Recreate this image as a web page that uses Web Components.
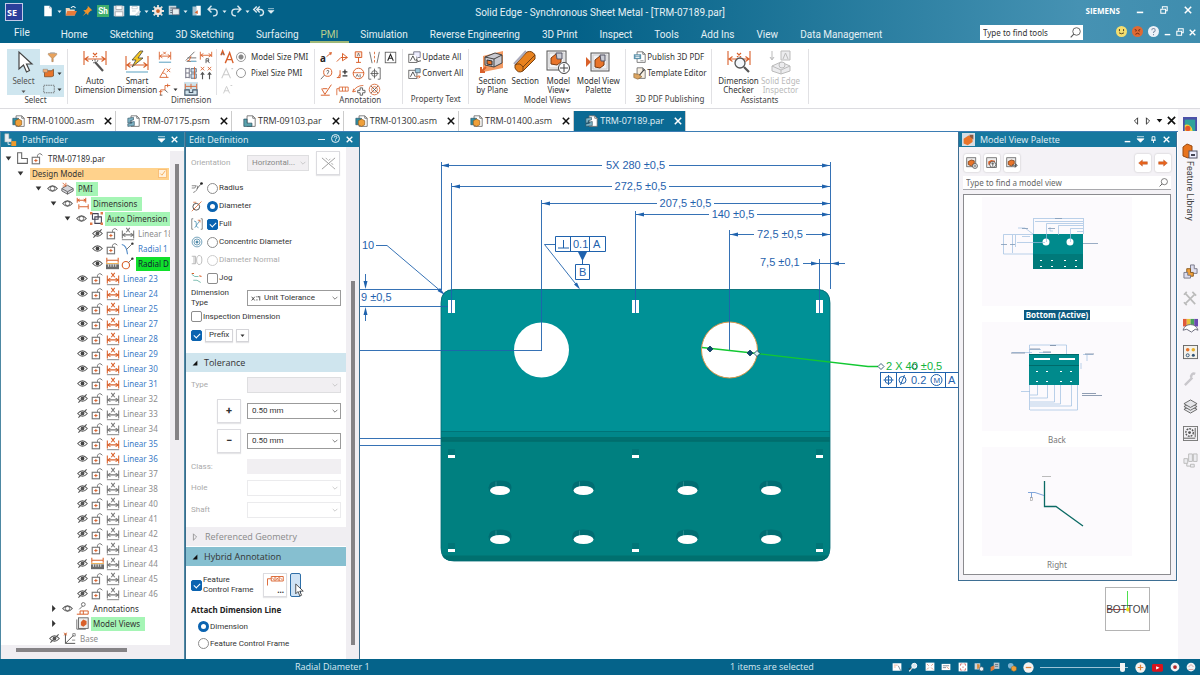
<!DOCTYPE html>
<html lang="en">
<head>
<meta charset="utf-8">
<title>Solid Edge - Synchronous Sheet Metal</title>
<style>
  html, body { margin: 0; height: 100%; }
  body { font: 8px/10px "Noto Sans", "Open Sans", sans-serif; color: #333; background: #fff; overflow: hidden; }
  edge-app { height: 100%; }
</style>
</head>
<body>
<edge-app></edge-app>
<script>
const O = '#d9602a', G = '#555', T = '#008a8c';

/* ---------- icon set: name -> [viewBox, markup] ---------- */
const dimBase = (a, b) => `<g fill="none" stroke="${b}" stroke-width="1.200"><path d="M1.500 4v9M14.500 4v9M2 9h12"/><path d="M5 7L2 9l3 2M11 7l3 2-3 2"/></g><path d="M1 14.500h14" stroke="#777"/><path d="M6 1l4 5M10 1L6 6" stroke="${a}" fill="none" stroke-width="1.200"/>`;
const bigDim = `<g fill="none" stroke="${O}" stroke-width="1.1"><path d="M1 1v14M23 1v14M2 9h20M5.500 6.500L2 9l3.500 2.500M18.500 6.500L22 9l-3.500 2.500M10 3l4 4M14 3l-4 4"/></g>`;
const eyeShape = `<path d="M1 8q7-8 14 0q-7 8-14 0z" fill="none" stroke="${G}" stroke-width="1.500"/>`;
const paper = (c = '#fff') => `<path d="M5 1h7l3 3v10h-10z" fill="${c}" stroke="#666"/><path d="M12 1v3h3" fill="none" stroke="#666"/>`;
const small = '0 0 16 16';
const ICONS = {
  doc: [small, `<path d="M3 1h7l3 3v11H3z" fill="#fff"/><path d="M10 1v3h3" fill="none" stroke="#9ab"/>`],
  open: [small, `<path d="M1 4h5l1 2h6v8H1z" fill="#e9d5bd"/><path d="M3 8h13l-3 6H1z" fill="#e87b3a"/><path d="M8 4q3-4 6 0" stroke="#fff" fill="none" stroke-width="1.500"/>`],
  pin: [small, `<path d="M9 1l6 6-2 .5-3 3-.5 3L7 11l-5 4 4-5-3-3 3.500-.5 2.500-3z" fill="#f0932b"/>`],
  sh: [small, `<rect width="16" height="16" fill="#3fae6c"/><text x="8" y="12" text-anchor="middle" font-size="11" font-weight="700" fill="#fff">Sh</text>`],
  save: [small, `<path d="M1 1h13l1 1v13H1z" fill="#d9dfe4"/><path d="M4 1h8v5H4zM3 9h10v6H3z" fill="#fff" stroke="#8b8f96" stroke-width=".8"/>`],
  saveas: [small, `<path d="M1 1h13v13H1z" fill="#fff"/><path d="M4 2h7v3H4zM4 8h5" fill="none" stroke="#b8c4cc"/><path d="M8 13l6-6 2 2-6 6z" fill="#d5dde2"/>`],
  gear: [small, `<path d="M8 0v16M0 8h16M2.300 2.300l11.400 11.400M13.700 2.300L2.300 13.700" stroke="#e6dfd8" stroke-width="2.400"/><circle cx="8" cy="8" r="5.500" fill="#efe8e2"/><circle cx="8" cy="8" r="2.500" fill="#c8622a"/>`],
  menu: [small, `<path d="M1 1h10v12H1z" fill="#c9d6de"/><path d="M3 4h11M3 7h9M3 10h9" stroke="#34495a"/><path d="M6 5h9v8H6z" fill="#e7edf0" stroke="#667"/>`],
  door: [small, `<path d="M2 2h5v12H2z" fill="#a9c3d0"/><path d="M7 1h6v13H7z" fill="#fff"/><path d="M9 7l-4 3 4 2" fill="#d9602a"/>`],
  undo: [small, `<path d="M6 1L1.500 5.500 6 10M2 5.500h7a4.500 4.500 0 010 9H8" fill="none" stroke="#dbe9f0" stroke-width="1.900"/>`],
  redo: [small, `<path d="M10 1l4.500 4.500L10 10M14 5.500H7a4.500 4.500 0 000 9h1" fill="none" stroke="#dbe9f0" stroke-width="1.900"/>`],
  undoall: [small, `<path d="M5 2L1 6l4 4M9 2L5 6l4 4M5 6h5a4 4 0 010 8H9" fill="none" stroke="#dbe9f0" stroke-width="1.900"/>`],
  caretbar: ['0 0 10 10', `<path d="M0 1h10M0 4h10L5 9z" stroke="currentColor" fill="currentColor"/>`],
  caret: ['0 0 10 10', `<path d="M1 3h8L5 8z" fill="currentColor"/>`],
  tleft: ['0 0 10 10', `<path d="M7 1v8L3 5z" fill="none" stroke="currentColor"/>`],
  tright: ['0 0 10 10', `<path d="M3 1v8l4-4z" fill="none" stroke="currentColor"/>`],
  tree1: ['0 0 10 10', `<path d="M1 2h8L5 8z" fill="#333"/>`],
  tree0: ['0 0 10 10', `<path d="M3 0v10l5-5z" fill="#333"/>`],
  corner: ['0 0 10 10', `<path d="M9 1v8H1z" fill="#111"/>`],
  chev: ['0 0 10 10', `<path d="M1 3l4 4 4-4" fill="none" stroke="currentColor" stroke-width="1.200"/>`],
  min: ['0 0 10 10', `<path d="M1 8h8" stroke="currentColor" stroke-width="2"/>`],
  dash: ['0 0 10 10', `<path d="M0 5h10" stroke="currentColor" stroke-width="1.300"/>`],
  restore: ['0 0 10 10', `<path d="M3 3V1h6v5H7M1 4h6v5H1z" fill="none" stroke="currentColor" stroke-width="1.300"/>`],
  close: ['0 0 10 10', `<path d="M1 1l8 8M9 1L1 9" stroke="currentColor" stroke-width="1.900"/>`],
  help: ['0 0 10 10', `<circle cx="5" cy="5" r="4.400" fill="none" stroke="currentColor"/><path d="M3.500 4q0-1.500 1.500-1.500T6.500 4Q6.500 5 5 5.500V6M5 7v1" fill="none" stroke="currentColor"/>`],
  helpball: [small, `<circle cx="8" cy="8" r="8" fill="#eef2f8"/><path d="M5.500 6q0-2.500 2.500-2.500T10.500 6Q10.500 7.500 8 9v1M8 11.500v2" fill="none" stroke="#7d90a8" stroke-width="1.500"/>`],
  happy: [small, `<circle cx="8" cy="8" r="8" fill="#f5de6e"/><path d="M5 4.500v3M11 4.500v3M4.500 10q3.500 2.500 7 0" stroke="#4a4020" stroke-width="1.400" fill="none"/>`],
  angry: [small, `<circle cx="8" cy="8" r="8" fill="#df6a33"/><path d="M4 5l3 1.500M12 5L9 6.500M5 12q3-3 6 0M5.500 7v1M10.500 7v1" stroke="#5a2410" stroke-width="1.300" fill="none"/>`],
  search: [small, `<circle cx="9.500" cy="6.500" r="5.500" fill="none" stroke="#555" stroke-width="1.300"/><path d="M5.500 10.500L1 15" stroke="#555" stroke-width="1.600"/>`],
  pinned: ['0 0 10 10', `<path d="M3 1h4v5H3zM1.500 6h7M5 6v4" fill="none" stroke="currentColor" stroke-width="1.300"/>`],

  cursor: ['0 0 24 24', `<path d="M7 2v17l4.500-4 3 7 3-1.500-3-6.500h5.500z" fill="#fff" stroke="#444" stroke-width="1.200"/>`],
  filter: [small, `<path d="M2 2h12v2L9 9v5H7V9L2 4z" fill="#e8a25c" stroke="#9a7b5c" stroke-width=".8"/><path d="M5 2v-1h6v1" stroke="#999" fill="none"/>`],
  selbox: [small, `<path d="M2 5h9l3-2v9l-3 1H2z" fill="#e8742a" stroke="#7a4a20"/><path d="M0 3h6v4H0z" fill="#f6b27a" stroke="#777" stroke-width=".6"/>`],
  dashbox: [small, `<rect x="1" y="3" width="14" height="10" fill="none" stroke="#555" stroke-dasharray="2 1"/>`],
  autodim: ['0 0 24 24', bigDim + `<path d="M12 12l8 9" stroke="#555" stroke-width="2.200"/><path d="M10 13l2-1M12 9v2M15 10l-1 2M9 10l1 1" stroke="#777"/>`],
  smartdim: ['0 0 24 24', `<g fill="none" stroke="${O}" stroke-width="1.100"><path d="M1 6v14M23 6v14M2 15h20M5.500 12.500L2 15l3.500 2.500M18.500 12.500L22 15l-3.500 2.500"/></g><path d="M15 1L7 10h4l-4 7 11-9h-5l5-7z" fill="#f3c623" stroke="#444" stroke-width=".8"/><path d="M1 22h22" stroke="#7fb6cf" stroke-width="1.300"/>`],
  dimh: [small, `<g fill="none" stroke="${O}"><path d="M1.500 2v9M14.500 2v9M2 7h12M5 5L2 7l3 2M11 5l3 2-3 2M6 2l3 3M9 2L6 5"/></g><path d="M1 14h14" stroke="#7fb6cf" stroke-width="1.500"/>`],
  dimang: [small, `<path d="M2 13L8 3M2 13h10" stroke="${O}" fill="none"/><path d="M5 8q5 0 5 5M10 3l4 4M14 3l-4 4" stroke="${O}" fill="none"/>`],
  dimcoord: [small, `<path d="M3 15V9h5V4h6M1 11h4M11 2v4" stroke="${O}" fill="none"/><path d="M2 15h3M8 9l3 3" stroke="#555"/>`],
  dimlin: [small, `<path d="M2 12L12 2M4 9h10M3 13h11" stroke="#666" fill="none"/><path d="M4 12h2l2-5" stroke="${O}" fill="none"/><path d="M8 13h6" stroke="#7fb6cf" stroke-width="1.500"/>`],
  dimr: [small, `<g fill="none" stroke="${O}"><path d="M1.500 2v9M14.500 2v6M2 6h12M5 4L2 6l3 2M11 4l3 2-3 2"/></g><path d="M8 15v-5h3v2.500H8M10 12l2 3" fill="none" stroke="#555"/>`],
  dimstack: [small, `<path d="M2 2v12M6 2v12M2 3h4M2 8h4M2 13h4" stroke="#667" fill="none"/><path d="M8 3h6v4H8zM8 9h6v5H8z" fill="#cde" stroke="#567"/><path d="M12 1v14" stroke="${O}"/>`],
  dimxx: [small, `<path d="M2 1l4 4M6 1L2 5M10 1l4 4M14 1l-4 4" stroke="${O}"/><path d="M4 15V8M2 10l2-2.500L6 10M12 15V8M10 10l2-2.500L14 10" stroke="#555" fill="none" stroke-width="1.300"/>`],
  dimauto: [small, `<rect width="16" height="16" fill="#cfe3ec"/><path d="M1.500 2v6M14.500 2v6M2 5h12M8 2v6" stroke="${O}" fill="none"/><path d="M1 9h5v3h4V9h5v6H1z" fill="none" stroke="#456" stroke-width="1.200"/>`],
  fontup: [small, `<path d="M1 6L3 1l2 5M6 15L11 3l4 12M8 11h6" stroke="${O}" fill="none" stroke-width="1.600"/><path d="M1.500 4.500h3" stroke="#555"/>`],
  fontA: [small, `<path d="M2 14L7 3l5 11M4 10h6M13 3h2" stroke="#ccc" fill="none" stroke-width="1.200"/>`],
  fonta: [small, `<path d="M4 13L7.500 5 11 13M5 10h5M12 4h2" stroke="#ccc" fill="none" stroke-width="1.100"/>`],

  leader: [small, `<path d="M8 7l6-5M14 2l-3 .5M14 2l-1 3" stroke="${O}" fill="none" stroke-width="1.200"/><text x="0" y="14" font-size="12" font-weight="700" fill="#222">a</text>`],
  arrowr: [small, `<path d="M1 13l5-5h8M8 3l6 5-6 4z" fill="none" stroke="${O}" stroke-width="1.200"/>`],
  datum: [small, `<path d="M4 1h8v7H4zM8 8v6M5 14h6" fill="#fbe9df" stroke="${O}" stroke-width="1.200"/><path d="M6.500 6.500L8 2.500l1.500 4" stroke="#555" fill="none" stroke-width=".8"/>`],
  edges: [small, `<path d="M2 1l3 14M14 1l-3 14" stroke="#777" fill="none" stroke-width="1.200"/><path d="M8 1v14" stroke="${O}" stroke-dasharray="3 2"/>`],
  boxA: [small, `<rect x="1.500" y="1.500" width="13" height="13" fill="none" stroke="#555"/><path d="M4.500 12L8 4l3.500 8M6 9h4" stroke="#222" fill="none" stroke-width="1.300"/>`],
  balloon: [small, `<circle cx="9.500" cy="6.500" r="5" fill="none" stroke="${O}" stroke-width="1.200"/><path d="M5.500 10L1 15M8 5q2-2 3 0l-2 4" stroke="#555" fill="none"/>`],
  rough: [small, `<path d="M1 13h4V4M5 9l-2 3" stroke="${O}" fill="none" stroke-width="1.200"/><path d="M11 3v6M8 6h6M8 11h6" stroke="#333" stroke-width="1.600"/>`],
  target: [small, `<circle cx="8" cy="8" r="6.500" fill="none" stroke="${O}" stroke-width="1.200"/><path d="M1 7h14" stroke="${O}"/><path d="M5 12l1.500-3L8 12M10 9v4" stroke="#555" fill="none"/>`],
  hole: [small, `<path d="M4 1H1v14h3M12 1h3v14h-3M8 2v12M3 8h10" stroke="#555" fill="none"/><circle cx="8" cy="8" r="3.500" fill="none" stroke="#555"/>`],
  surface: [small, `<path d="M2 7l4 7 8-12M3 7h6M1 15h11" stroke="${O}" fill="none" stroke-width="1.200"/>`],
  fcf: [small, `<path d="M4 5h11v5H4zM8 5v5M11.500 5v5M4 7H1v8" stroke="${O}" fill="none"/>`],
  cross: [small, `<path d="M1 11Q5 3 14 3M1 11l1-4M1 11l4-1" stroke="${O}" fill="none"/><path d="M10 6h3v3h3v3h-3v3h-3v-3H7V9h3z" stroke="#555" fill="none" stroke-width="1.100"/>`],
  weld: [small, `<circle cx="8" cy="8" r="6.500" fill="none" stroke="${O}"/><path d="M3.500 3.500l9 9M12.500 3.500l-9 9" stroke="#555"/><circle cx="8" cy="8" r="3.500" fill="none" stroke="${O}"/>`],
  upall: [small, `<rect x="1" y="4" width="10" height="10" fill="none" stroke="#555"/><path d="M3 12l3-6 3 6M10 10l2 3 4-1" stroke="#333" fill="none"/><path d="M7 4V1h8v7h-3" fill="#eef" stroke="#667"/>`],
  convall: [small, `<rect x="1" y="4" width="10" height="10" fill="none" stroke="#555"/><path d="M3 12l3-6 3 6" stroke="#333" fill="none"/><path d="M9 2h6v5H9z" fill="#9cc7da" stroke="#567"/><path d="M10 12h5M13 10l2 2-2 2" stroke="${O}" fill="none"/>`],
  secplane: ['0 0 24 24', `<path d="M3 6L23 1v17L3 22z" fill="#f29a63"/><path d="M5 7l10-4 7 2v8l-8 4-9-2z" fill="#c9c9cf" stroke="#444"/><path d="M5 7l9 2v8M14 9l8-4" fill="none" stroke="#444"/><path d="M7 10l5 1v4l-5-1z" fill="#e8742a" stroke="#333"/><path d="M1 17v5h4M1 22l5-5" stroke="${O}" stroke-width="2" fill="none"/>`],
  section: ['0 0 24 24', `<path d="M2 15L14 2q5-2 8 3v4L10 21q-5 3-8-3z" fill="#e8821e" stroke="#7a4210"/><path d="M2 15q5-3 8 2v4M10 17L22 5" stroke="#7a4210" fill="none"/><path d="M1 14L13 1" stroke="#aab" stroke-width="2"/>`],
  mview: ['0 0 24 24', `<rect x="1" y="1" width="19" height="19" fill="#f4f4f6" stroke="#555"/><path d="M3 3h15v15H3z" fill="none" stroke="#ccc"/><path d="M5 8l5-4 5 1v7l-4 3-6-1z" fill="#e8742a" stroke="#7a3a10"/><path d="M10 3h6v6h-5z" fill="#c9cbd3" stroke="#556"/><circle cx="18" cy="18" r="5.500" fill="#fff" stroke="#444"/><path d="M18 14v8M14 18h8" stroke="#444"/>`],
  mvpal: ['0 0 24 24', `<rect x="5" y="3" width="18" height="18" fill="#f0f0f3" stroke="#555"/><path d="M7 5h14v14H7z" fill="none" stroke="#ccc"/><path d="M9 10l5-4 4 1v8l-4 3-5-1z" fill="#e8742a" stroke="#7a3a10"/><path d="M14 5h5v6h-4z" fill="#c9cbd3" stroke="#556"/><path d="M0 7l5 5-5 5z" fill="${O}"/>`],
  pdf: [small, `${paper()}<path d="M1 4h9v6H1z" fill="#5f94ad"/><path d="M3 6h5M3 8h5" stroke="#fff"/><path d="M9 12h4" stroke="#888"/>`],
  tmpl: [small, `${paper('#f7efe2')}<path d="M1 8l6 1 4 3-5 3-5-2z" fill="#dba461" stroke="#7a5a30" stroke-width=".7"/><path d="M8 10l6-7" stroke="#444" stroke-width="1.400"/>`],
  dimcheck: ['0 0 24 24', bigDim + `<circle cx="13" cy="13" r="5" fill="#f2f7fb" stroke="#555" stroke-width="1.300"/><path d="M17 17l5 5" stroke="#555" stroke-width="2.200"/>`],
  inspect: ['0 0 24 24', `<g fill="#ececee" stroke="#bbb"><path d="M12 1h9v9h-9zM3 1v8M1 7l2 3 2-3M3 16l9-4 9 4v5l-9 3-9-3z"/><path d="M3 16l9 4 9-4M12 20v4" fill="none"/><path d="M14 9l2.500-6L19 9" fill="none"/><circle cx="13" cy="15" r="3"/></g>`],

  asm: [small, `${paper()}<path d="M1 4h7v8H1z" fill="#2f8fa5" stroke="#245" stroke-width=".7"/><path d="M4 7l4-2 4 2v5l-4 2-4-2z" fill="#f0a03a" stroke="#7a4a10" stroke-width=".7"/>`],
  psm: [small, `${paper()}<path d="M1 4l7-1v3l-4 1v2l5-1v5l-8 1v-3l5-1v-1l-5 1z" fill="#7fb4c6" stroke="#245" stroke-width=".7"/>`],
  par: [small, `${paper()}<path d="M1 5h4v5h6v4H1z" fill="#5aa3ad" stroke="#245" stroke-width=".8"/>`],

  pf: [small, `<path d="M1 1h5v6h3v4H1z" fill="#e9eef2" stroke="#aaa" stroke-width=".6"/><path d="M9 10h6v6H9z" fill="#ef9a2c"/><path d="M5 11v3h3" stroke="#fff" fill="none"/>`],
  ell: [small, `<path d="M2 1h5v7h7v6H2z" fill="#fff" stroke="#666" stroke-width="1.300"/>`],
  lock: [small, `<rect x="1.500" y="6.500" width="9" height="8" fill="#fff" stroke="#777" stroke-width="1.400"/><path d="M8 6V4q2.500-4 6 0" fill="none" stroke="#777" stroke-width="1.200"/><path d="M6 8.500v4M4 10.500h4" stroke="${O}" stroke-width="1.200"/>`],
  eye: [small, eyeShape + `<circle cx="8" cy="8" r="2.800" fill="#444"/>`],
  eyeo: [small, eyeShape + `<circle cx="8" cy="8" r="3.200" fill="none" stroke="${G}" stroke-width="1.200"/>`],
  eyex: [small, eyeShape + `<circle cx="8" cy="8" r="2.800" fill="#555"/><path d="M2 14L14 2" stroke="#555" stroke-width="1.500"/>`],
  pmi: [small, `<path d="M1 8l7-4 7 4v3l-7 4-7-4z" fill="#d5d5da" stroke="#555"/><path d="M1 8l7 4 7-4M8 12v3" stroke="#555" fill="none"/><path d="M2 1l4 4M6 1v4H2" stroke="${O}" fill="none"/>`],
  dims: [small, `<g fill="none" stroke="${O}" stroke-width="1.200"><path d="M1.500 1v6M12 1v6M2 4h10M3.500 9v6M15 9v6M4 12h11M4.500 2.500L2 4l2.500 1.500M9.500 2.500L12 4 9.500 5.500"/></g>`],
  group: [small, `<path d="M3 2h7v7H3zM6 6h8v8H6z" fill="none" stroke="#445" stroke-width="1.300"/><path d="M0 0h3v3H0zM13 0h3v3h-3zM0 13h3v3H0zM13 13h3v3h-3z" fill="#e07a4a"/>`],
  lin: [small, dimBase(O, O)],
  ling: [small, dimBase('#777', '#777')],
  rad: [small, `<path d="M1 3q6 1 7 12" stroke="#4a86c5" fill="none" stroke-width="1.300"/><path d="M7 9l6-6" stroke="#555"/><circle cx="14" cy="2" r="1.500" fill="#333"/>`],
  radd: [small, `<circle cx="6" cy="10" r="4.500" fill="none" stroke="${O}" stroke-width="1.400"/><path d="M9 7l5-5" stroke="#555"/><circle cx="14" cy="2" r="1.500" fill="#333"/>`],
  ruler: [small, `<path d="M1 1v6M15 1v6M1 4h14" stroke="${O}" stroke-width="1.300"/><path d="M0 9h16v6H0z" fill="#6b6b6b"/><path d="M3 9v3M6 9v3M9 9v3M12 9v3" stroke="#fff"/><path d="M0 8h16" stroke="#e8a23c"/>`],
  annot: [small, `<circle cx="9" cy="3" r="2.300" fill="none" stroke="#555"/><path d="M8 5L4 9" stroke="#555"/><path d="M1 15h14v-4H5v4M9 11v4" fill="none" stroke="${O}" stroke-width="1.200"/>`],
  mviews: [small, `<rect x="3" y="1" width="12" height="13" fill="#eee" stroke="#555"/><path d="M1 3v12h11" stroke="#555" fill="none"/><path d="M6 6l3-3 4 2v4l-4 3-3-2z" fill="${O}"/>`],
  base: [small, `<path d="M3 2v12h12M3 14L13 4" stroke="#555" fill="none" stroke-width="1.200"/><path d="M1 1l4 3M5 1L1 4" stroke="${O}"/><path d="M12 2h3v3h-3zM11 10h4" stroke="#777" fill="none"/>`],
  tick: [small, `<rect x="1" y="1" width="14" height="14" fill="#fff1dc" stroke="#f8b96e" stroke-width="1.500"/><path d="M4 8l3 3 6-8" stroke="#f3a64a" fill="none" stroke-width="1.500"/>`],

  nodim: [small, `<path d="M1 2l14 12M15 2L1 14" stroke="#999"/><path d="M5 2l2 2M8 5l2-2M11 8l2 1" stroke="#aaa"/>`],
  eradius: [small, `<path d="M1 5h6M1 8h4l2-3M3 14q6-2 6-9" stroke="#666" fill="none"/><path d="M8 9l5-6" stroke="#444"/><circle cx="14" cy="2" r="1.800" fill="#222"/>`],
  ediam: [small, `<circle cx="7" cy="9" r="4.500" fill="none" stroke="#444" stroke-width="1.200"/><path d="M1 15L14 2M3 3h4" stroke="${O}"/>`],
  efull: [small, `<path d="M3 1H1v14h2M13 1h2v14h-2" stroke="#666" fill="none"/><path d="M4 4q4 0 3 4t3 5M12 3L5 13" stroke="#4a8fb0" fill="none"/><path d="M9 3h3v3" stroke="${O}" fill="none"/>`],
  econc: [small, `<g fill="none" stroke="#4a86a5"><circle cx="8" cy="8" r="6.500"/><circle cx="8" cy="8" r="4"/><circle cx="8" cy="8" r="1.500" fill="#4a86a5"/></g>`],
  enorm: [small, `<path d="M1 3h5v10H1M4 3v10" stroke="#aaa" fill="none"/><ellipse cx="11" cy="8" rx="3.500" ry="6" fill="none" stroke="#aaa"/>`],
  ejog: [small, `<path d="M1 3l4 3h5M3 11h5l5 3" stroke="#5a9" fill="none"/><path d="M1 2h3M11 5l3 1" stroke="${O}" stroke-width="1.500"/>`],
  unittol: [small, `<path d="M1 6l5 6M6 6l-5 6M14 5v7M9.500 5v2M9.500 10v2M12 5v2" stroke="#333" fill="none" stroke-width="1.300"/>`],
  fcfbtn: ['0 0 24 16', `<path d="M7 2h16v6H7zM12 2v6M17.500 2v6M7 5H2v9" stroke="${O}" fill="none" stroke-width="1.200"/><path d="M8.500 3.500l2 3M13.500 3.500l3 3M16.500 3.500l-3 3M19 3.500l2.500 3" stroke="${O}"/>`],
  pointer: ['0 0 12 18', `<path d="M1 1v13l3-3 2.500 6 2.300-1-2.500-5.500H11z" fill="#fff" stroke="#222"/>`],

  cubeicon: [small, `<rect width="16" height="16" fill="#d6dde3"/><path d="M2 7l6-4 5 2v6l-6 4-5-2z" fill="#e8742a"/><path d="M9 2h5v6l-4-3z" fill="#8a5a44"/>`],
  mvt: [small, `<rect x="1" y="1" width="12" height="12" fill="#eee" stroke="#555"/><path d="M3 6l4-2 4 1v4l-4 3-4-2z" fill="#e8742a" stroke="#7a3a10"/><circle cx="12" cy="12" r="3.300" fill="#fff" stroke="#444"/><path d="M12 10v4M10 12h4" stroke="#444" stroke-width=".8"/>`],
  mvt2: [small, `<rect x="1" y="1" width="13" height="13" fill="#eee" stroke="#555"/><path d="M3 6l4-2 5 1v5l-4 2-5-2z" fill="#d9602a"/><circle cx="9" cy="10" r="4" fill="#fff" stroke="#444"/><path d="M9 7v6M7 9h4" stroke="#444"/>`],
  mvt3: [small, `<rect x="1" y="1" width="12" height="12" fill="#eee" stroke="#555"/><path d="M3 6l4-2 4 1v4l-4 3-4-2z" fill="#e8742a" stroke="#7a3a10"/><path d="M8 11h6M12 9l3 2-3 3" stroke="#333" fill="none"/>`],
  aleft: [small, `<path d="M1 8l6-5v3h8v4H7v3z" fill="#e8641e" stroke="#a8481a" stroke-width=".6"/>`],
  aright: [small, `<path d="M15 8L9 3v3H1v4h8v3z" fill="#e8641e" stroke="#a8481a" stroke-width=".6"/>`],

  contour: [small, `<rect width="16" height="16" fill="#4b4fa8"/><path d="M2 3h12v13H2z" fill="#2fa39a"/><path d="M2 16V9a7 7 0 019 7z" fill="#f5d23c"/><circle cx="5.500" cy="13" r="3" fill="#e8552a"/>`],
  feat: [small, `<path d="M1 4l4-3 5 2v9l-4 3-5-2z" fill="#e8741e" stroke="#9a4a10"/><rect x="7" y="8" width="8" height="7" fill="#eef" stroke="#556"/><path d="M9 11h4v2H9z" fill="#445"/>`],
  family: [small, `<path d="M8 1h4v4h3v5H8z" fill="#dde" stroke="#778"/><path d="M4 5h4v4h3v4H4z" fill="#f0a03a" stroke="#8a5a20"/><path d="M1 9h4v3h3v3H1z" fill="#dde" stroke="#778"/>`],
  tools: [small, `<path d="M2 2l11 12M13 3L3 13M10 1l4 4M1 12l3 3M1 4l3-3" stroke="#bbb" stroke-width="1.800" fill="none"/>`],
  paint: [small, `<rect x="0" y="1" width="4" height="8" fill="#e05a3a"/><rect x="4" y="1" width="4" height="8" fill="#e8c33a"/><rect x="8" y="1" width="4" height="8" fill="#4aa35a"/><rect x="12" y="1" width="4" height="8" fill="#6a4ab0"/><path d="M0 13q2-6 8-6t8 6l-3-1-4 3-5-3z" fill="#fff" stroke="#667"/>`],
  palette: [small, `<rect x=".5" y=".5" width="15" height="14" fill="#f4f1ea" stroke="#666"/><circle cx="5" cy="5" r="1.900" fill="#e8742a"/><circle cx="11" cy="5" r="1.900" fill="#e8b02a"/><circle cx="5" cy="11" r="1.600" fill="none" stroke="#357"/><circle cx="11" cy="11" r="1.600" fill="#357"/>`],
  wrench: [small, `<path d="M2 14l8-8M9 6a3 3 0 014-4" stroke="#c9c7cc" stroke-width="2.500" fill="none"/>`],
  layers: [small, `<g fill="#e6e6ea" stroke="#555" stroke-width=".9"><path d="M1 11l7-3.500 7 3.500-7 4z"/><path d="M1 8l7-3.500L15 8l-7 4z"/><path d="M1 5l7-4 7 4-7 4z"/></g>`],
  gearbox: [small, `<rect x=".5" y=".5" width="15" height="15" fill="#f4f2f6" stroke="#777"/><circle cx="7" cy="7" r="4" fill="none" stroke="#555" stroke-dasharray="2 1" stroke-width="1.500"/><circle cx="7" cy="7" r="1.500" fill="#555"/><path d="M13 2v10M1 13h12" stroke="#555"/>`],
  cols: [small, `<path d="M6 1h4v8H6zM11 1h4v8h-4zM1 6h4v5H1zM8 12h4v3H8zM4 11v3h4" fill="#ececf0" stroke="#bbb"/>`],

  s1: [small, `<rect x="1" y="2" width="14" height="12" fill="#fff"/><path d="M3 5h6M3 8h3" stroke="#e0906a"/><path d="M10 6l4 8" stroke="#456"/>`],
  s2: [small, `<circle cx="10" cy="6" r="4" fill="#d8e6ee" stroke="#fff" stroke-width="1.500"/><path d="M7 9l-5 6" stroke="#fff" stroke-width="2"/><path d="M1 11h5" stroke="#3a2a20"/>`],
  s3: [small, `<rect x="1" y="1" width="14" height="13" fill="#fff"/><path d="M3 3l3 3M13 3l-3 3M3 12l3-3M13 12l-3-3" stroke="#c86a4a"/>`],
  s4: [small, `<path d="M1 3h14v10H1z" fill="#fff"/><path d="M3 6h10M3 9h5" stroke="#456"/><path d="M9 8l4 3" stroke="#c86a4a"/>`],
  s5: [small, `<rect x="1" y="1" width="14" height="14" fill="#fff"/><path d="M4 6V3h3M12 6V3H9M4 10v3h3M12 10v3H9" stroke="#c64a4a" fill="none"/><circle cx="8" cy="8" r="1" fill="#c64a4a"/>`],
  s6: [small, `<path d="M1 2h9v10H1z" fill="#cfd5d9"/><path d="M5 3l4 1v6l-4 1z" fill="#d98a3a"/><circle cx="12" cy="11" r="3.500" fill="#e8f0f4" stroke="#456"/>`],
  s7: [small, `<path d="M6 1h9v10H6z" fill="#b9c7d0"/><path d="M1 8l6-3v7l-6 3z" fill="#e07a3a"/><path d="M8 4h5M8 7h5" stroke="#456"/>`],
  s8: [small, `<circle cx="6" cy="6" r="4.500" fill="#7eb4d2"/><path d="M7 8l4-2 4 2v5l-4 2-4-2z" fill="#f0a03a" stroke="#8a5a20" stroke-width=".6"/>`],
  zminus: [small, `<circle cx="8" cy="8" r="7.500" fill="#f7f3ef"/><path d="M4 8h8" stroke="#e0833a" stroke-width="1.800"/>`],
  zplus: [small, `<circle cx="8" cy="8" r="7.500" fill="#f7f3ef"/><path d="M4 8h8M8 4v8" stroke="#e0833a" stroke-width="1.800"/>`],
  yt: [small, `<rect y="3" width="16" height="11" rx="2" fill="#d8141c"/><path d="M6 6v5l5-2.500z" fill="#fff"/>`],
  rec: [small, `<circle cx="8" cy="8" r="7" fill="#f2f2f4"/><circle cx="8" cy="8" r="3" fill="#b0282c"/>`],
  up: [small, `<circle cx="8" cy="8" r="7" fill="#f2f2f4"/><path d="M4 8l4-4 4 4M4 12h8" stroke="#c27a7a" fill="none"/>`]
};

/* ---------- component helper ---------- */
function define(tag, css, markup) {
  customElements.define(tag, class extends HTMLElement {
    connectedCallback() {
      if (this.shadowRoot) return;
      const t = document.createElement('template');
      t.innerHTML = `<style>*{box-sizing:border-box}button,select,input{font:inherit;color:inherit;margin:0}button{border:0;padding:0;background:none}a{color:inherit;text-decoration:none}${css}</style>` +
        (typeof markup === 'function' ? markup(this) : markup);
      this.attachShadow({ mode: 'open' }).append(t.content.cloneNode(true));
    }
  });
}
const ic = (n, s = 12) => `<se-icon name="${n}" size="${s}"></se-icon>`;
const ibtn = (n, label, s = 12) => `<button aria-label="${label}">${ic(n, s)}</button>`;

define('se-icon', ':host{display:inline-flex;flex:none}svg{display:block;overflow:visible}', h => {
  const [vb, m] = ICONS[h.getAttribute('name')], s = +h.getAttribute('size') || 12, [, , w, g] = vb.split(' ');
  return `<svg width="${Math.round(s * w / g)}" height="${s}" viewBox="${vb}" aria-hidden="true">${m}</svg>`;
});

/* ---------- application frame ---------- */
define('edge-app', `
  :host{display:grid;grid-template:auto auto minmax(0,1fr) auto / minmax(0,1fr) 22px}
  title-bar,ribbon-bar,status-bar{grid-column:1/-1}
  .work{display:flex;flex-direction:column;min-height:0}
  .panes{flex:1;display:grid;grid-template-columns:185px 175px minmax(0,1fr);min-height:0;position:relative}
  view-palette{position:absolute;right:1px;top:0}
`, `<title-bar></title-bar><ribbon-bar></ribbon-bar>
  <div class="work"><doc-tabs></doc-tabs>
    <div class="panes"><path-finder></path-finder><edit-definition></edit-definition><model-canvas></model-canvas><view-palette></view-palette></div>
  </div>
  <feature-dock></feature-dock><status-bar></status-bar>`);

/* ---------- title bar and menu ---------- */
define('title-bar', `
  :host{display:block;color:#e4f0f5;background:linear-gradient(90deg,#036188 0,#036188 48%,#1f7699 66%,#4692b3 90%,#3f8dae 100%);font:10px/12px Roboto,"Noto Sans",sans-serif}
  .top{display:grid;grid-template-columns:1fr auto 1fr;height:22px;align-items:center}
  .doc{padding-top:3px}
  .qat,.win,.tools,nav{display:flex;align-items:center}
  .qat button{width:16px;display:flex;justify-content:center}
  .qat button.c{width:7px}
  .logo{width:18px;height:18px;margin:2px 17px 0 5px;background:#2b3f9b;border:1px solid #c3cbe8;font:700 9px/18px "Noto Sans",sans-serif;color:#fff;text-align:left;padding-left:1px}
  .win{justify-content:flex-end;gap:16px;padding-right:8px;color:#fff}
  .win b{font:700 8px/12px "Open Sans",sans-serif}
  .bot{display:flex;justify-content:space-between;height:21px;align-items:stretch}
  nav a{padding:2px 11px 0;height:21px;line-height:21px;white-space:nowrap}
  nav a.file{padding:0 14px;margin-right:6px}
  nav a.on{color:#b9cf8c;border-bottom:2px solid #9fb878;height:20px;padding-top:1px}
  .tools{padding:0 4px 0 0;gap:5px;color:#fff}
  form{display:flex;align-items:center;background:#fff;height:15px;width:103px;margin-right:28px;padding:0 2px}
  form input{width:88px;border:0;padding:0 1px;outline:0;background:none;font:8px/12px "Noto Sans",sans-serif}
  form input::placeholder{color:#333;opacity:1}
`, `<div class="top"><div class="qat"><span class="logo">SE</span>
  ${ibtn('doc', 'New')}<button class="c" aria-label="New options">${ic('caret', 5)}</button>${ibtn('open', 'Open')}${ibtn('pin', 'Pin')}${ibtn('sh', 'Sheet metal')}${ibtn('save', 'Save')}${ibtn('saveas', 'Save as')}<button class="c" aria-label="Save options">${ic('caret', 5)}</button>${ibtn('gear', 'Options')}${ibtn('menu', 'Windows')}<button class="c" aria-label="Window options">${ic('caret', 5)}</button>${ibtn('door', 'Close document')}${ibtn('undo', 'Undo')}<button class="c" aria-label="Undo list">${ic('caret', 5)}</button>${ibtn('redo', 'Redo')}<button class="c" aria-label="Redo list">${ic('caret', 5)}</button>${ibtn('undoall', 'Repeat')}<button class="c" aria-label="Customize">${ic('caretbar', 6)}</button></div>
  <div class="doc">Solid Edge - Synchronous Sheet Metal - [TRM-07189.par]</div>
  <div class="win"><b>SIEMENS</b>${ibtn('min', 'Minimize', 8)}${ibtn('restore', 'Restore', 8)}${ibtn('close', 'Close', 8)}</div></div>
  <div class="bot"><nav><a href="#" class="file">File</a>${['Home', 'Sketching', '3D Sketching', 'Surfacing', 'PMI', 'Simulation', 'Reverse Engineering', '3D Print', 'Inspect', 'Tools', 'Add Ins', 'View', 'Data Management'].map(t => `<a href="#"${t === 'PMI' ? ' class="on"' : ''}>${t}</a>`).join('')}</nav>
  <div class="tools"><form><input aria-label="Type to find tools" placeholder="Type to find tools">${ic('search', 11)}</form>${ibtn('happy', 'Like', 11)}${ibtn('angry', 'Dislike', 11)}${ibtn('helpball', 'Help', 11)}${ibtn('min', 'Minimize document', 7)}${ibtn('restore', 'Restore document', 8)}${ibtn('close', 'Close document', 7)}</div></div>`);

/* ---------- ribbon ---------- */
define('ribbon-group', `
  :host{display:flex;flex-direction:column;padding:0 6px;position:relative;border-right:1px solid #e1e1e4;margin:6px 0 5px;height:55px}
  .body{display:flex;height:46px}.cap{text-align:center;line-height:10px;white-space:nowrap;color:#444}
`, h => `<div class="body"><slot></slot></div><div class="cap">${h.getAttribute('label')}</div>`);

define('ribbon-button', `
  :host{display:block}
  button{display:flex;flex-direction:column;align-items:center;width:100%;height:46px;line-height:9px;color:#333;padding-top:1px}
  .t{white-space:pre;text-align:center;margin-top:2px;display:flex;align-items:flex-end;position:relative}
  :host([disabled]) button{color:#bbb}
  :host([active]) button{background:#cfe6ef;color:#555}
  .under{margin-top:4px}
  .c{position:absolute;right:0;bottom:1px}
`, h => `<button${h.hasAttribute('disabled') ? ' disabled' : ''}>${ic(h.getAttribute('icon'), 24)}<span class="t">${h.getAttribute('label').replace('|', '\n')}${h.hasAttribute('menu') ? '<se-icon class="c" name="caret" size="5"></se-icon>' : ''}</span>${h.hasAttribute('active') ? '<se-icon class="under" name="caret" size="5"></se-icon>' : ''}</button>`);

define('ribbon-item', `
  :host{display:block;height:16px}
  button{display:flex;align-items:center;gap:1px;height:16px;white-space:nowrap;color:#333}
  :host([on]) button{background:#cfe6ef}
  :host([wide]) button{width:24px;justify-content:center;gap:2px}
`, h => `<button aria-label="${h.getAttribute('label') || h.getAttribute('icon')}">${ic(h.getAttribute('icon'), +h.getAttribute('size') || 14)}${h.hasAttribute('menu') ? ic('caret', 5) : ''}<slot></slot></button>`);

const ri = (n, extra = '') => `<ribbon-item icon="${n}" ${extra}></ribbon-item>`;
define('ribbon-bar', `
  :host{display:flex;height:66px;background:#fff;border-bottom:1px solid #dcdce0;color:#333;overflow:hidden}
  .g{display:grid;align-content:start;grid-auto-rows:16px}
  .dim{grid-template-columns:26px 15px 15px}
  .fonts{border-left:1px solid #e1e1e4;padding-left:3px;margin-left:2px;width:20px}
  .ann{grid-template-columns:repeat(5,16px)}
  label{display:flex;align-items:center;gap:5px;white-space:nowrap}
  input{appearance:none;width:10px;height:10px;border:1px solid #999;border-radius:50%}
  input:checked{background:radial-gradient(circle,#888 0 2px,#fff 3px)}
  .first{padding:0 3px 0 7px}
  .slim{padding:0 2px 0 5px}
  .mid{padding:0 5px}
  .pdf{padding:0 4px 0 7px}
`, `<ribbon-group label="Select" class="first"><ribbon-button icon="cursor" label="Select" active style="width:33px"></ribbon-button><div class="g">${ri('filter', 'wide size="11"')}${ri('selbox', 'wide on menu size="12"')}${ri('dashbox', 'wide on menu size="12"')}</div></ribbon-group>
  <ribbon-group label="Dimension"><ribbon-button icon="autodim" label="Auto|Dimension" style="width:42px"></ribbon-button><ribbon-button icon="smartdim" label="Smart|Dimension" style="width:42px"></ribbon-button>
  <div class="g dim">${ri('dimh')}${ri('dimlin')}${ri('dimr')}${ri('dimang')}${ri('dimstack')}${ri('dimxx')}${ri('dimcoord', 'menu')}${ri('dimauto')}</div>
  <div class="g fonts">${ri('fontup')}${ri('fontA')}${ri('fonta')}</div>
  <div class="g"><label><input type="radio" name="size" checked>Model Size PMI</label><label><input type="radio" name="size">Pixel Size PMI</label></div></ribbon-group>
  <ribbon-group label="Annotation" class="slim"><div class="g ann">${['leader', 'arrowr', 'datum', 'edges', 'boxA', 'balloon', 'rough', 'target', 'hole'].map(n => ri(n, 'size="13"')).join('')}<span></span>${['surface', 'fcf', 'cross', 'weld'].map(n => ri(n, 'size="13"')).join('')}</div></ribbon-group>
  <ribbon-group label="Property Text" class="mid"><div class="g"><ribbon-item icon="upall" label="Update All" size="13">Update All</ribbon-item><ribbon-item icon="convall" label="Convert All" size="13">Convert All</ribbon-item></div></ribbon-group>
  <ribbon-group label="Model Views" class="mid"><ribbon-button icon="secplane" label="Section|by Plane" style="width:36px"></ribbon-button><ribbon-button icon="section" label="Section" style="width:30px"></ribbon-button><ribbon-button icon="mview" label="Model|View  " menu style="width:36px"></ribbon-button><ribbon-button icon="mvpal" label="Model View|Palette" style="width:44px"></ribbon-button></ribbon-group>
  <ribbon-group label="3D PDF Publishing" class="pdf"><div class="g"><ribbon-item icon="pdf" label="Publish 3D PDF" size="13">Publish 3D PDF</ribbon-item><ribbon-item icon="tmpl" label="Template Editor" size="13">Template Editor</ribbon-item></div></ribbon-group>
  <ribbon-group label="Assistants"><ribbon-button icon="dimcheck" label="Dimension|Checker" style="width:42px"></ribbon-button><ribbon-button icon="inspect" label="Solid Edge|Inspector" disabled style="width:42px"></ribbon-button></ribbon-group>`);

/* ---------- document tabs ---------- */
define('doc-tab', `
  :host{display:flex;align-items:center;height:20px;padding:0 3px 0 11px;font:9px/12px "Open Sans",sans-serif;color:#333;border-right:1px solid #ccc;white-space:nowrap}
  a{display:flex;align-items:center;gap:2px;margin-right:10px}button{color:#111;display:flex}
  :host([active]){background:#0b6a94;color:#e6f2f7}:host([active]) button{color:#fff}
`, h => `<a href="#">${ic(h.getAttribute('icon'), 13)}<slot></slot></a>${ibtn('close', 'Close tab', 8)}`);
define('doc-tabs', `
  :host{display:flex;height:23px;align-items:flex-end;border-bottom:1px solid #3d7db4;padding-left:1px;background:#fff}
  .nav{margin-left:auto;display:flex;align-items:center;gap:4px;height:21px;padding-right:2px;color:#111}
  .nav button{display:flex}
`, `<doc-tab icon="asm">TRM-01000.asm</doc-tab><doc-tab icon="psm">TRM-07175.psm</doc-tab><doc-tab icon="par">TRM-09103.par</doc-tab><doc-tab icon="asm">TRM-01300.asm</doc-tab><doc-tab icon="asm">TRM-01400.asm</doc-tab><doc-tab icon="psm" active>TRM-07189.par</doc-tab>
  <div class="nav">${ibtn('tleft', 'Previous', 8)}${ibtn('tright', 'Next', 8)}${ibtn('caret', 'List', 7)}${ibtn('close', 'Close', 9)}</div>`);

/* ---------- docked panel header ---------- */
define('panel-head', `
  :host{display:flex;align-items:center;height:15px;flex:none;background:#17789f;color:#e4f1f6;font:9px/12px "Open Sans",sans-serif;padding:0 6px 0 3px;white-space:nowrap}
  .r{margin-left:auto;display:flex;align-items:center;gap:6px;color:#fff}se-icon.i{margin-right:5px}
`, h => `${h.getAttribute('icon') ? `<se-icon class="i" name="${h.getAttribute('icon')}" size="13"></se-icon>` : ''}<slot></slot><span class="r">${h.getAttribute('actions').split(' ').map(a => ibtn(a, a, a === 'help' ? 9 : 7)).join('')}</span>`);

/* ---------- PathFinder ---------- */
define('tree-row', `
  :host{display:flex;align-items:center;height:15px;white-space:nowrap;width:max-content}
  .c{width:15px;display:flex;justify-content:center;flex:none}
  .c.n{width:13px}
  .l{line-height:14px;padding:0 2px;margin-left:1px}
  .green{background:#a5f5b5;padding-right:5px}.bright{background:#10e02c;color:#123}.blue{color:#3b7ac6}.grey{color:#8c8c8c}
  .model{background:#ffd28c;line-height:12px;width:139px;margin-left:3px;display:flex;justify-content:space-between;align-items:center}
`, h => {
  const a = n => h.getAttribute(n);
  return (a('caret') ? `<span class="c n">${ic('tree' + a('caret'), 7)}</span>` : '') +
    (a('icons') || '').split(' ').filter(Boolean).map(n => `<span class="c">${n === '_' ? '' : ic(n, n.startsWith('eye') ? 11 : n.startsWith('lin') ? 14 : 13)}</span>`).join('') +
    `<span class="l ${a('tone') || ''}"><slot></slot>${a('tone') === 'model' ? ic('tick', 9) : ''}</span>`;
});
const tr = (x, caret, icons, tone, text) => `<tree-row style="padding-left:${x}px" ${caret !== '' ? `caret="${caret}"` : ''} icons="${icons}" tone="${tone}">${text}</tree-row>`;
const visible = new Set([23, 24, 25, 27, 28, 29, 30, 31, 35, 36]);
const linears = [23, 24, 25, 27, 28, 29, 30, 31, 32, 33, 34, 35, 36, 37, 38, 40, 41, 42, 43, 44, 45, 46];
define('path-finder', `
  :host{display:flex;flex-direction:column;border:solid #4d88a3;border-width:0 1px;min-height:0;background:#fff}
  .mid{flex:1;display:grid;grid-template-columns:minmax(0,1fr) 14px;min-height:0}
  .rows{overflow:hidden;padding-top:4px}
  .v{background:#f0eef2;margin-top:4px;display:grid;grid-template-rows:13fr 276fr 205fr;justify-content:center}
  .v i,.h i{background:#858386;width:4px;grid-row:2}
  .h{height:14px;background:#f0eef2;display:grid;grid-template-columns:15fr 111fr 57fr}
  .h i{width:auto;height:4px;grid-column:2;grid-row:1;margin-top:3px}
`, `<panel-head icon="pf" actions="caretbar close">PathFinder</panel-head>
  <div class="mid"><div class="rows">
  ${tr(1, 1, 'ell lock', '', 'TRM-07189.par')}${tr(13, 1, '', 'model', 'Design Model')}${tr(31, 1, 'eyeo pmi', 'green', 'PMI')}${tr(46, 1, 'eyeo dims', 'green', 'Dimensions')}${tr(60, 1, 'eyeo group', 'green', 'Auto Dimension')}
  ${tr(89, '', 'eyex lock ling', 'grey', 'Linear 18')}${tr(89, '', 'eye lock rad', 'blue', 'Radial 1')}${tr(89, '', 'eye ruler radd', 'bright', 'Radial D')}
  ${linears.map(n => visible.has(n) ? tr(74, '', 'eye lock lin', 'blue', 'Linear ' + n) : tr(74, '', `eyex ${n === 44 ? 'ruler' : 'lock'} ling`, 'grey', 'Linear ' + n)).join('')}
  ${tr(46, 0, 'eyeo annot', '', 'Annotations')}${tr(46, 0, '_ mviews', 'green', 'Model Views')}${tr(46, '', 'eyex base', 'grey', 'Base')}
  </div><div class="v"><i></i></div></div><div class="h"><i></i></div>`);

/* ---------- Edit Definition ---------- */
define('drop-down', `
  :host{display:block;position:relative}
  select{appearance:none;width:100%;height:16px;border:1px solid #9b9b9b;background:#fff;padding:0 4px;color:#333;display:block}
  se-icon{position:absolute;right:3px;top:5px;color:#555;pointer-events:none}
  .lead{right:auto;left:4px;top:3px}:host([lead]) select{padding-left:16px}
  :host([disabled]) select{border-color:#dedee0;background:#f1eff2;color:#888;opacity:1}
  :host([plain]) select{background:#fff;border-color:#ebebed}
  :host([disabled]) se-icon{color:#bbb}
`, h => `<select aria-label="${h.getAttribute('label')}"${h.hasAttribute('disabled') ? ' disabled' : ''}><option>${h.getAttribute('value') || ''}</option></select>${h.hasAttribute('lead') ? '<se-icon class="lead" name="unittol" size="10"></se-icon>' : ''}${ic('chev', 6)}`);

const opt = (icon, type, label, state = '') => `<div class="opt${state.includes('disabled') ? ' off' : ''}">${ic(icon, 12)}<label><input type="${type}" name="kind" ${state}>${label}</label></div>`;
define('edit-definition', `
  :host{display:flex;flex-direction:column;min-height:0;background:#fff;border:solid #3a6c8c;border-width:0 1px;color:#333}
  .mid{flex:1;display:grid;grid-template-columns:minmax(0,1fr) 13px;min-height:0}
  .v{background:#f0eef2;display:grid;grid-template-rows:134fr 364fr 14fr;justify-content:center}.v i{grid-row:2;width:4px;background:#858386}
  .form{overflow:hidden;font-family:Roboto,"Noto Sans",sans-serif}
  .grid{display:grid;grid-template-columns:56px minmax(0,1fr);align-items:center;padding:0 5px}
  .orient{grid-template-columns:56px 62px 31px;justify-content:start;padding-top:4px;height:28px}
  .orient .sq{margin-left:7px}
  .sq{width:24px;height:24px;border:1px solid #dcdce0;background:#fff;display:flex;align-items:center;justify-content:center;box-shadow:0 1px 1px #e6e6e8;font-weight:700;font-size:11px}
  .opts{padding:4px 5px 0}
  .opt{display:flex;align-items:center;gap:4px;height:18px}
  label{display:flex;align-items:center;gap:1px}
  input{appearance:none;width:11px;height:11px;border:1px solid #8c8c8c;background:#fff;flex:none;border-radius:2px;display:grid;place-items:center}
  input[type=radio]{border-radius:50%}
  input[type=radio]:checked{border:3px solid #0a63b0}
  input[type=checkbox]:checked{background:#0a63b0;border-color:#0a63b0}
  input[type=checkbox]:checked::after{content:"";width:3px;height:5px;border:solid #fff;border-width:0 1px 1px 0;transform:rotate(45deg)}
  .off,.dis{color:#aaa}.off input{border-color:#ccc}
  .type{height:21px}.insp{height:17px;padding:0 5px}.prefix{height:20px;padding:0 5px;display:flex;align-items:center;gap:3px}
  .prefix button{border:1px solid #d4d4d8;height:13px;padding:0 3px;box-shadow:0 1px 1px #e6e6e8;display:flex;align-items:center}
  h3{margin:0;height:19px;display:flex;align-items:center;gap:6px;padding:0 6px;font:9px/12px "Open Sans",sans-serif;color:#333}
  .tol{background:#cfe5ee;margin-top:8px}.ref{background:#f0eef2;color:#8a8a8a;margin-bottom:1px;padding:0 5px}.hyb{background:#86bfd0}
  .vals{row-gap:6px;padding:5px 5px 9px}
  .vals .sq{margin-left:26px}
  .vals input{width:100%;height:15px;border:0;border-radius:0;background:#f1eff2}
  .fcf{display:flex;align-items:center;padding:7px 5px 5px;height:36px}
  .fcf label{width:72px;line-height:10px}
  .fb{flex-direction:column;gap:0;font:700 8px/6px "Noto Sans",sans-serif;align-items:flex-end;padding:0 2px 3px 1px}
  .hot{position:relative;width:11px;height:24px;border:1px solid #2f6fa8;border-radius:2px;background:#cfe3f5;margin-left:3px}
  .hot se-icon{position:absolute;left:4px;top:9px}
  b{display:block;padding:3px 5px 3px;font:700 8px/10px "Noto Sans",sans-serif;color:#222}
  .att{padding-left:12px}.att label{height:17px}
`, `<panel-head actions="dash help close">Edit Definition</panel-head>
  <div class="mid"><div class="form">
  <div class="grid orient"><span class="dis">Orientation</span><drop-down label="Orientation" value="Horizontal..." disabled></drop-down><button class="sq" aria-label="Axis" disabled>${ic('nodim', 15)}</button></div>
  <div class="opts">${opt('eradius', 'radio', 'Radius')}${opt('ediam', 'radio', 'Diameter', 'checked')}${opt('efull', 'checkbox', 'Full', 'checked')}${opt('econc', 'radio', 'Concentric Diameter')}${opt('enorm', 'radio', 'Diameter Normal', 'disabled')}${opt('ejog', 'checkbox', 'Jog')}</div>
  <div class="grid type"><span>Dimension<br>Type</span><drop-down label="Dimension Type" value="Unit Tolerance" lead></drop-down></div>
  <label class="insp"><input type="checkbox">Inspection Dimension</label>
  <div class="prefix"><input type="checkbox" checked aria-label="Use prefix"><button>Prefix</button><button aria-label="Prefix list">${ic('caret', 5)}</button></div>
  <h3 class="tol">${ic('corner', 6)}Tolerance</h3>
  <div class="grid vals"><span class="dis">Type</span><drop-down label="Type" disabled></drop-down>
  <button class="sq">+</button><drop-down label="Upper tolerance" value="0.50 mm"></drop-down>
  <button class="sq">−</button><drop-down label="Lower tolerance" value="0.50 mm"></drop-down>
  <label class="dis" for="cls">Class:</label><input id="cls" type="text" disabled>
  <span class="dis">Hole</span><drop-down label="Hole" disabled plain></drop-down>
  <span class="dis">Shaft</span><drop-down label="Shaft" disabled plain></drop-down></div>
  <h3 class="ref">${ic('tright', 8)}Referenced Geometry</h3>
  <h3 class="hyb">${ic('corner', 6)}Hybrid Annotation</h3>
  <div class="fcf"><label><input type="checkbox" checked><span>Feature<br>Control Frame</span></label><button class="sq fb" aria-label="Feature control frame">${ic('fcfbtn', 12)}<span>...</span></button><button class="hot" aria-label="Pick frame">${ic('pointer', 14)}</button></div>
  <b>Attach Dimension Line</b>
  <div class="att"><label><input type="radio" name="att" checked>Dimension</label><label><input type="radio" name="att">Feature Control Frame</label></div>
  </div><div class="v"><i></i></div></div>`);

/* ---------- model canvas ---------- */
const B = '#1f62ad';
const ah = (x, y, dir) => ({ l: `M${x} ${y}l8-2v4z`, r: `M${x} ${y}l-8-2v4z`, u: `M${x} ${y}l-2 8h4z`, d: `M${x} ${y}l-2-8h4z` })[dir];
const dim = (x1, t1, t2, x2, y, text) => `<path d="M${x1} ${y}H${t1}M${t2} ${y}H${x2}" stroke="${B}" stroke-width=".9"/><path d="${ah(x1, y, 'l')}${ah(x2, y, 'r')}" fill="${B}"/><text x="${(t1 + t2) / 2}" y="${y + 3}" text-anchor="middle">${text}</text>`;
const slots = [448, 632, 816].map(x => `<path d="M${x} 300h7v13h-7z" fill="#fff"/>` + [455, 549].map(y => `<path d="M${x} ${y - 6}h7v6h-7z" fill="#007577"/><path d="M${x} ${y}h7v3h-7z" fill="#fff"/>`).join('')).join('');
const holes = [500, 583.5, 687.5, 771].map(x => [490.5, 539.5].map(y => `<path d="M${x - 11.500} ${y - 3}q0-7 11.500-7t11.500 7q0 6-11.500 7t-11.500-7z" fill="#006d72"/><path d="M${x - 4} ${y - 9}v6" stroke="#26898c"/><ellipse cx="${x}" cy="${y}" rx="10" ry="4.500" fill="#fff"/>`).join('')).join('');
const diamond = (x, y, f) => `<path d="M${x - 3} ${y}l3-3 3 3-3 3z" fill="${f}" stroke="#123c5c" stroke-width=".8"/>`;
define('model-canvas', `:host{display:block;min-width:0;min-height:0;background:#fff;overflow:hidden}
  svg{display:block;width:100%;height:100%}text{font:11px "Liberation Sans",Arial,sans-serif;fill:${B}}.gr{fill:#10b43c}.cube{font-size:10px;fill:#444}`,
`<svg viewBox="360 132 818 527" preserveAspectRatio="xMinYMin meet" fill="none" role="img" aria-label="Sheet metal part with dimensions">
  <path d="M441 548V303q0-13.500 13-13.500H817q13 0 13 13.500V548q0 13-13 13H454q-13 0-13-13z" fill="#008080"/>
  <path d="M441 441V303q0-13.500 13-13.500H817q13 0 13 13.500V441z" fill="#009196"/>
  <path d="M441 432h389v10H441z" fill="#00878a"/><path d="M441 437h389v5H441z" fill="#00716f"/><path d="M441 431.500h389M441 440.500h389" stroke="#006c6e" stroke-width=".8"/>
  <path d="M442 555.500h387q-3 5.500-12 5.500H454q-9 0-12-5.500z" fill="#00706f"/>
  <path d="M441 548V303q0-13.500 13-13.500H817q13 0 13 13.500V548q0 13-13 13H454q-13 0-13-13z" stroke="#036b73" stroke-width=".8"/>
  ${slots}${holes}
  <circle cx="541.500" cy="350" r="27.500" fill="#fff"/><circle cx="729.500" cy="350" r="28" fill="#fff" stroke="#d9964a"/>
  <g stroke="${B}" stroke-width=".9">
    <path d="M441.500 162V289M830.500 162V289M451.500 183V313M541.500 200V350.500M635.500 211V313M729.500 230V350M819.500 259V313"/>
    <path d="M360 289.500h82M360 306.500h88M360 350.500h182M360 438.500h81M360 445.500h81M365.500 274v10M365.500 311v10"/>
    <path d="M376 245.500h11L443 293M555 244.500h-10.500L579 288M803 263.500h42"/>
  </g>
  <path d="${ah(365.5, 289, 'd')}${ah(365.5, 307, 'u')}${ah(819, 263.5, 'r')}${ah(831, 263.5, 'l')}M445 295l-7.500-4 2.500-3zM580 289.500l-6-5 3-2zM578 252h9l-4.500 9z" fill="${B}"/>
  ${dim(441, 602, 669, 830, 165.5, '5X 280 ±0,5')}${dim(452, 612, 669, 830, 186.5, '272,5 ±0,5')}${dim(542, 657, 714, 830, 203.5, '207,5 ±0,5')}${dim(636, 709, 757, 830, 214.5, '140 ±0,5')}${dim(730, 754, 806, 830, 234.5, '72,5 ±0,5')}
  <text x="760" y="266">7,5 ±0,1</text><text x="362" y="249">10</text><text x="361" y="301">9 ±0,5</text>
  <path d="M555.500 236.500h50v15h-50zM570.500 236.500v15M589.500 236.500v15M582.500 260v4M575.500 264.500h14v15h-14zM563.500 240v8M558 248h11" stroke="${B}"/>
  <text x="573" y="248">0.1</text><text x="593" y="248">A</text><text x="579" y="276">B</text>
  <path d="M702 347.500L757 353.500 868 366.500h10" stroke="#12c832" stroke-width="1.300"/>
  ${diamond(710, 349, '#0d4a6e')}${diamond(750, 353, '#0d4a6e')}${diamond(757, 353.5, '#d7f0f0')}${diamond(881, 366.5, '#fff')}
  <circle cx="914.500" cy="366.500" r="2.500" stroke="#345"/>
  <text class="gr" x="886" y="370">2 X 40 ±0,5</text>
  <path d="M880.500 372.500H959M880.500 387.500H959M880.500 372v16M896.500 372v15M945.500 372v15" stroke="${B}"/>
  <g stroke="${B}"><circle cx="888.500" cy="380" r="3.500"/><path d="M888.500 375v10M883.500 380h10M902.500 380m-3.500 0a3.500 3.500 0 107 0a3.500 3.500 0 10-7 0M900.500 385l4-10"/><circle cx="936.500" cy="380" r="5.500"/></g>
  <text x="911" y="384">0.2</text><text x="933.500" y="383" style="font-size:8px">M</text><text x="948" y="384">A</text>
  <rect x="1105.500" y="587.500" width="44" height="43" stroke="#b4b4b4"/>
  <path d="M1127.500 591v20" stroke="#4ee04e"/><path d="M1107 609.500h20" stroke="#b04a4a"/><circle cx="1128" cy="609.500" r="2" fill="#e8e020"/>
  <text class="cube" x="1127.500" y="613" text-anchor="middle">BOTTOM</text>
</svg>`);

/* ---------- Model View Palette ---------- */
const thumbs = {
  bottom: `<path d="M51 37h50v35H51z" fill="${T}"/><path d="M51 57h50v15H51z" fill="#007a7a"/><circle cx="64" cy="45" r="3.500" fill="#fff"/><circle cx="88" cy="45" r="3.500" fill="#fff"/><g fill="#fff">${[58, 69, 82, 93].map(x => `<path d="M${x} 63h2v1h-2zM${x} 69h2v1h-2z"/>`).join('')}</g><path d="M51.500 37V21M101.500 37V21M52 21.500h49M53 24.500h48M64.500 45V26.500H101M76.500 38V28.500H101M88.500 45V31.500H101M51 37.500H21.500v19.500H51M40 39.500h8M33.500 38v12M35 45.500h28M30.500 38v18M51 37l-8-6h-7M68 30v4h3M95 34.500h6" stroke="#9dbde0" stroke-width=".7"/><path d="M101 46.500h15M73 21.500h7M40 31.500h6M66 31.500h7M19 47.500h6M28 47.500h5" stroke="#7f98b5" stroke-width=".8"/>`,
  back: `<path d="M47 32h50v31H47z" fill="${T}"/><path d="M47 32h50v1H47zM47 43h50v1H47z" fill="#006a6a"/><path d="M52 36h16v2H52zM77 36h16v2H77z" fill="#fff"/><g fill="#fff">${[54, 64, 78, 88].map(x => `<path d="M${x} 49h2v1h-2zM${x} 59h2v1h-2z"/>`).join('')}</g><path d="M47.500 32v-9h37v9M30 30.500h20M47 27.500h12M57 30.500h12M101 32.500h10M105 33v6M99 41v6M47.500 63v25M95.500 63v25H48M89.500 63v21H48M78.500 63v19H48M72.500 63v17H48M65.500 63v13H48M55.500 63v10H48M39 69.500h9" stroke="#9dbde0" stroke-width=".7"/><path d="M29 31h14M48 27h10M61 30h8M100 71.500h14M100 73.500h20M68 23.500h6M103 32h9" stroke="#73879f" stroke-width=".8"/>`,
  right: `<path d="M62.500 34v25.500h11.500L101 79" stroke="#0b6a64" stroke-width="1.300"/><path d="M60 29.500h9" stroke="#bbb"/><path d="M46 45.500h7M49.500 46v5M53 45.500l9 3" stroke="#5f8fd0" stroke-width=".8"/><rect x="48.500" y="50.500" width="2" height="3" stroke="#999" stroke-width=".6"/>`
};
define('view-thumb', `
  :host{display:flex;flex-direction:column;align-items:center;height:125px;color:#777;padding-right:20px}
  svg{display:block;background:#fcfafd;width:150px;height:109px}
  .l{line-height:10px;padding:0 2px;margin-top:4px}
  :host([active]) .l{background:#0d5a80;color:#fff;font-weight:700}
`, h => `<svg viewBox="0 0 150 109" fill="none" role="img" aria-label="${h.textContent}">${thumbs[h.getAttribute('view')]}</svg><span class="l"><slot></slot></span>`);
define('view-palette', `
  :host{display:flex;flex-direction:column;width:219px;background:#f4f2f6;border:1px solid #3e6f94;border-top:0;height:449px}
  .bar{display:flex;gap:4px;padding:7px 5px 3px 5px}
  .bar button{width:16px;height:18px;background:#fff;border-radius:2px;box-shadow:0 0 2px #bbb;display:flex;align-items:center;justify-content:center}
  .bar .s{margin-left:auto}
  .find{display:flex;align-items:center;height:14px;background:#fff;margin:1px 5px 4px 4px;padding:0 3px;border-bottom:1px solid #a9a9ad}
  .find input{flex:1;border:0;outline:0;background:none;padding:0;font:8px/12px "Noto Sans",sans-serif}
  .find input::placeholder{color:#666;opacity:1}
  .list{flex:1;background:#fff;border:1px solid #8b8b8f;margin:0 5px 5px 4px;padding:2px 0 0;overflow:hidden}
`, `<panel-head icon="cubeicon" actions="min caretbar pinned close">Model View Palette</panel-head>
  <div class="bar">${ibtn('mvt', 'Add view', 12)}${ibtn('mvt2', 'Show view', 12)}${ibtn('mvt3', 'Update view', 12)}<button class="s" aria-label="Previous">${ic('aleft', 10)}</button>${ibtn('aright', 'Next', 10)}</div>
  <div class="find"><input aria-label="Type to find a model view" placeholder="Type to find a model view">${ic('search', 9)}</div>
  <div class="list"><view-thumb view="bottom" active>Bottom (Active)</view-thumb><view-thumb view="back">Back</view-thumb><view-thumb view="right">Right</view-thumb></div>`);

/* ---------- right dock ---------- */
define('feature-dock', `
  :host{display:flex;flex-direction:column;align-items:center;background:#f7f5f9;padding:8px 0 0 2px;gap:12px}
  button{display:flex}
  .lib{flex-direction:column;align-items:center;height:78px;margin-bottom:31px;gap:2px;color:#444}
  .lib span{writing-mode:vertical-rl;font:9px/12px Roboto,sans-serif;white-space:nowrap}
`, `${ibtn('contour', 'Simulation', 14)}<button class="lib">${ic('feat', 16)}<span>Feature Library</span></button>${['family', 'tools', 'paint', 'palette', 'wrench', 'layers', 'gearbox', 'cols'].map(n => ibtn(n, n, 15)).join('')}`);

/* ---------- status bar ---------- */
define('status-bar', `
  :host{display:grid;grid-template-columns:295fr 435fr 162fr 308px;height:16px;align-items:center;background:#05638a;color:#d9eaf2;font:9px/12px "Open Sans",sans-serif;white-space:nowrap}
  .m{grid-column:2}
  .icons{display:flex;align-items:center;grid-column:4;justify-content:space-between;padding-right:4px}
  .icons button{display:flex}
  input{appearance:none;width:88px;height:10px;background:linear-gradient(#9cc3d6,#9cc3d6) center/100% 1px no-repeat}
  input::-webkit-slider-thumb{appearance:none;width:5px;height:9px;background:#f4f4f4;border-radius:0 0 3px 3px}
`, `<span class="m">Radial Diameter 1</span><span>1 items are selected</span>
  <div class="icons">${[1, 2, 3, 4, 5, 6, 7, 8].map(n => ibtn('s' + n, 'View tool ' + n, 10)).join('')}${ibtn('zminus', 'Zoom out', 11)}<input type="range" aria-label="Zoom" value="96">${ibtn('zplus', 'Zoom in', 11)}${ibtn('yt', 'Videos', 11)}${ibtn('rec', 'Record', 10)}${ibtn('up', 'Upload', 10)}</div>`);
</script>
</body>
</html>
